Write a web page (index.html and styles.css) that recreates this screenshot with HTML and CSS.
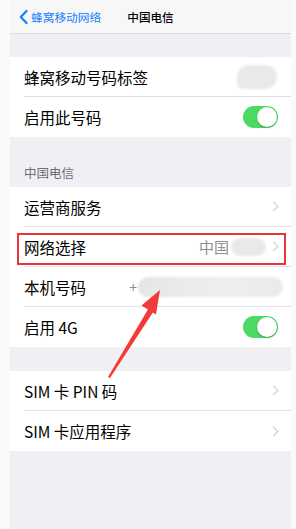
FILE: index.html
```html
<!DOCTYPE html>
<html lang="zh">
<head>
    <meta charset="UTF-8">
    <meta name="viewport" content="width=device-width, initial-scale=1.0">
    <title>中国电信</title>
    <link rel="stylesheet" href="styles.css">
</head>
<body>
    <div class="screen">
        <div class="navbar">
            <a class="back" href="#cellular">
                <svg width="9" height="14" viewBox="0 0 9 14"><path d="M7.5 1 L1.8 7 L7.5 13" fill="none" stroke="#157efb" stroke-width="2.2" stroke-linecap="round" stroke-linejoin="round"/></svg>
                <span>蜂窝移动网络</span>
            </a>
            <div class="title">中国电信</div>
            <div></div>
        </div>

        <div class="gap"></div>
        <div class="group">
            <div class="row">
                <div class="row-body">
                    <span class="label">蜂窝移动号码标签</span>
                    <span class="blur blur-label"></span>
                </div>
            </div>
            <div class="row">
                <div class="row-body">
                    <span class="label">启用此号码</span>
                    <span class="toggle"><span class="knob"></span></span>
                </div>
            </div>
        </div>

        <div class="section-header">中国电信</div>
        <div class="group">
            <div class="row">
                <div class="row-body">
                    <span class="label">运营商服务</span>
                    <span class="chevron"></span>
                </div>
            </div>
            <div class="row marked">
                <div class="row-body">
                    <span class="label">网络选择</span>
                    <span class="value">中国</span>
                    <span class="blur blur-net"></span>
                    <span class="chevron"></span>
                </div>
            </div>
            <div class="row">
                <div class="row-body">
                    <span class="label">本机号码</span>
                    <span class="plus">+</span>
                    <span class="blur blur-phone"></span>
                </div>
            </div>
            <div class="row">
                <div class="row-body">
                    <span class="label">启用 4G</span>
                    <span class="toggle"><span class="knob"></span></span>
                </div>
            </div>
        </div>

        <div class="gap small"></div>
        <div class="group">
            <div class="row">
                <div class="row-body">
                    <span class="label">SIM 卡 PIN 码</span>
                    <span class="chevron"></span>
                </div>
            </div>
            <div class="row">
                <div class="row-body">
                    <span class="label">SIM 卡应用程序</span>
                    <span class="chevron"></span>
                </div>
            </div>
        </div>

        <!-- annotation arrow pointing at the phone number -->
        <svg class="arrow" width="281" height="529" viewBox="10 0 281 529">
            <polygon points="108,377 110,378 153.5,311.5 148.5,308.5" fill="#f23a3a"/>
            <polygon points="160,290 156,314.5 141.5,305.5" fill="#f23a3a"/>
        </svg>
    </div>
</body>
</html>
```

FILE: styles.css
```css
body {
    margin: 0;
    background-color: #fafafa;
    font-family: "Noto Sans CJK SC", "Noto Sans", sans-serif;
    color: #111;
}
.screen {
    position: relative;
    margin-left: 10px;
    width: 281px;
    min-height: 529px;
    background-color: #efeff4;
}
.navbar {
    display: grid;
    grid-template-columns: 1fr auto 1fr;
    align-items: center;
    height: 33px;
    background-color: #f7f7f8;
    border-bottom: 1px solid #dadadf;
}
.back {
    display: flex;
    align-items: center;
    gap: 3px;
    padding-left: 9px;
    color: #157efb;
    text-decoration: none;
    font-size: 11.7px;
}
.title {
    font-size: 11.6px;
    font-weight: 500;
    color: #000;
}
.gap {
    height: 23px;
}
.gap.small {
    height: 24px;
}
.section-header {
    display: flex;
    align-items: flex-end;
    height: 50px;
    box-sizing: border-box;
    padding: 0 0 6px 14px;
    font-size: 12.5px;
    line-height: 16px;
    color: #6d6d72;
}
.group {
    background-color: #fff;
}
.row {
    position: relative;
    padding-left: 14px;
}
.row-body {
    display: flex;
    align-items: center;
    height: 40px;
    box-sizing: border-box;
    padding-right: 13px;
    border-bottom: 1px solid #e0e0e4;
}
.row:last-child .row-body {
    border-bottom: none;
}
.label {
    flex: 1;
    font-size: 15.5px;
    color: #000;
}
.value {
    font-size: 15px;
    color: #8e8e93;
}
.plus {
    font-size: 14px;
    color: #8e8e93;
    margin-right: 1px;
}
.blur {
    display: block;
    background-color: #e9e9ea;
    filter: blur(1.2px);
}
.blur-label {
    width: 40px;
    height: 24px;
    border-radius: 12px 12px 12px 6px;
    margin-right: 1px;
}
.blur-net {
    width: 35px;
    height: 18px;
    border-radius: 9px;
    margin-left: 2px;
    background-color: #ebe8e9;
}
.blur-phone {
    width: 145px;
    height: 20px;
    border-radius: 10px;
    margin-right: -5px;
    background: linear-gradient(90deg, #e6e6e7, #efefef 60%, #eaeaea);
}
.chevron {
    width: 6px;
    height: 6px;
    margin-left: 6px;
    margin-right: 1px;
    border-top: 1.5px solid #c7c7cc;
    border-right: 1.5px solid #c7c7cc;
    transform: rotate(45deg);
}
.blur-net + .chevron {
    margin-left: 4px;
}
.toggle {
    position: relative;
    width: 35px;
    height: 22px;
    border-radius: 11px;
    background-color: #4cd964;
}
.knob {
    position: absolute;
    top: 1px;
    right: 1px;
    width: 20px;
    height: 20px;
    border-radius: 50%;
    background-color: #fff;
    box-shadow: 0 1px 2px rgba(0, 0, 0, 0.25);
}
.marked::after {
    content: "";
    position: absolute;
    left: 7px;
    right: 5px;
    top: 6px;
    bottom: 2px;
    border: 2px solid #e8333a;
}
.arrow {
    position: absolute;
    left: 0;
    top: 0;
    pointer-events: none;
}
```
